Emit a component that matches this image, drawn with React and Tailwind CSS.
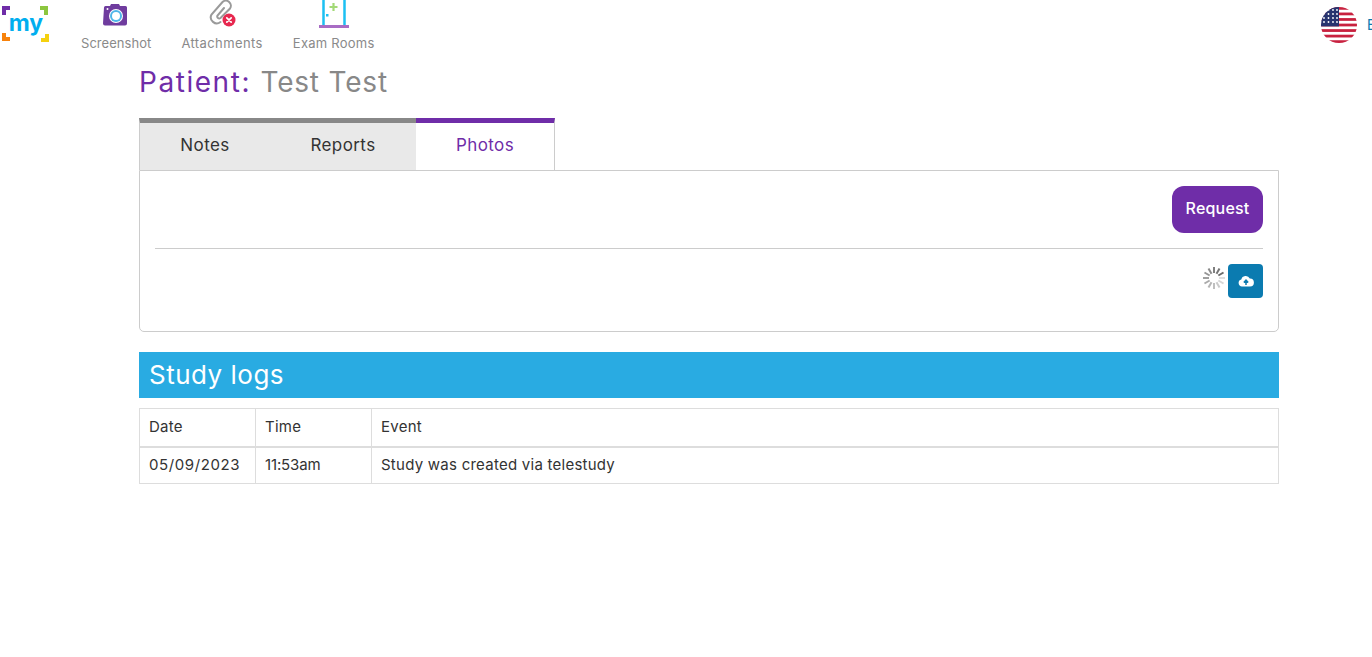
const FONT = "font-['Inter','Liberation_Sans',sans-serif]";

function Logo() {
  return (
    <svg width="50" height="44" viewBox="0 0 50 44" className="block">
      <path d="M2 6h8v4H6v5H2z" fill="#6f2da8" />
      <path d="M40 6h8v9h-4v-5h-4z" fill="#8cc63f" />
      <path d="M2 33h4v4h4v4H2z" fill="#f7820c" />
      <path d="M45 34h4v8h-8v-4h4z" fill="#f5d10f" />
      <text x="26" y="31" textAnchor="middle" fontSize="23" fontWeight="700" fill="#00aeef" fontFamily="Inter, sans-serif">my</text>
    </svg>
  );
}

function CameraIcon() {
  return (
    <svg width="26" height="26" viewBox="0 0 26 26" className="block">
      <path d="M1 5.500a1.500 1.500 0 0 1 1.500-1.500h4.500l1-2h8l1 2h5.500a1.500 1.500 0 0 1 1.500 1.500v16a2 2 0 0 1-2 2h-20a2 2 0 0 1-2-2z" fill="#6f3c9e" />
      <circle cx="13" cy="14" r="7" fill="#fff" />
      <circle cx="13" cy="14" r="6" fill="#4fb5e8" />
      <circle cx="13" cy="14" r="4" fill="#fff" />
      <circle cx="4.500" cy="7" r="1" fill="#fff" />
    </svg>
  );
}

function ClipIcon() {
  return (
    <svg width="30" height="28" viewBox="0 0 30 28" className="block">
      <path d="M17 8 10.500 15.500a2 2 0 0 0 3 2.500L23 8.500a5 5 0 0 0-7.500-6.500L4.500 14.500a6 6 0 0 0 9 7.500" fill="none" stroke="#9a9a9a" strokeWidth="2" strokeLinecap="round" />
      <circle cx="22" cy="20" r="6.500" fill="#e7284f" />
      <path d="m19.800 17.800 4.400 4.400m0-4.400-4.400 4.400" stroke="#fff" strokeWidth="1.700" strokeLinecap="round" />
    </svg>
  );
}

function DoorIcon() {
  return (
    <svg width="32" height="28" viewBox="0 0 32 28" className="block">
      <path d="M5.500 0v25M26.500 0v25" stroke="#1cc0f2" strokeWidth="2.500" fill="none" />
      <path d="M15.500 3v8M11.500 7h8" stroke="#a3d977" strokeWidth="2.200" />
      <rect x="8" y="14" width="2.500" height="2.500" fill="#1cc0f2" />
      <rect x="1" y="25" width="30" height="3" fill="#a86cc4" />
    </svg>
  );
}

function Flag() {
  const stripes = [0, 2, 4, 6, 8, 10, 12].map(i => i * 2.77);
  return (
    <svg width="36" height="36" viewBox="0 0 36 36" className="block">
      <clipPath id="flagClip"><circle cx="18" cy="18" r="18" /></clipPath>
      <g clipPath="url(#flagClip)">
        <rect width="36" height="36" fill="#fff" />
        {stripes.map(y => <rect key={y} y={y} width="36" height="2.770" fill="#c8213f" />)}
        <rect width="18" height="19.400" fill="#27346f" />
        {[3, 7, 11, 15].map(y => [3, 7.500, 12, 16].map(x => (
          <circle key={`${x}-${y}`} cx={x} cy={y} r="0.900" fill="#fff" />
        )))}
      </g>
    </svg>
  );
}

function Spinner() {
  const ticks = [...Array(12).keys()];
  return (
    <svg width="24" height="24" viewBox="0 0 24 24" className="block mt-[2px]">
      {ticks.map(i => (
        <line key={i} x1="12" y1="1" x2="12" y2="7" stroke="#666" strokeWidth="2"
          opacity={0.2 + ((i + 9) % 12) * 0.07} transform={`rotate(${i * 30} 12 12)`} />
      ))}
    </svg>
  );
}

function UploadIcon() {
  return (
    <svg width="16" height="12" viewBox="0 0 16 12" className="block">
      <path d="M4 11.500a3.500 3.500 0 0 1-.7-6.900A4.500 4.500 0 0 1 11.800 3.500a4 4 0 0 1 .2 8z" fill="#fff" />
      <path d="M8 10V5.500M5.800 7.500 8 5.200l2.200 2.300" stroke="#0b7bb0" strokeWidth="1.500" fill="none" />
    </svg>
  );
}

function NavItem({ icon, label, track }) {
  return (
    <div className="flex flex-col items-center">
      <div className="h-[28px] flex items-end">{icon}</div>
      <div className={`mt-[7px] text-[13px] leading-[16px] text-[#8a8a8a] ${track}`}>{label}</div>
    </div>
  );
}

export default function App() {
  return (
    <div className={`${FONT} w-[1372px] h-[657px] overflow-hidden bg-white`}>
      {/* top bar */}
      <div className="flex h-[52px]">
        <div className="w-[81px]"><Logo /></div>
        <div className="flex gap-[30px]">
          <NavItem icon={<CameraIcon />} label="Screenshot" track="tracking-[0.05px]" />
          <NavItem icon={<ClipIcon />} label="Attachments" track="tracking-[0.4px]" />
          <NavItem icon={<DoorIcon />} label="Exam Rooms" track="tracking-[0.25px]" />
        </div>
        <div className="ml-auto flex items-start gap-[10px] pt-[7px] w-[51px]">
          <div className="shrink-0"><Flag /></div>
          <span className="text-[14px] leading-[36px] text-[#0b7bb0]">E</span>
        </div>
      </div>

      <div className="ml-[139px] w-[1140px]">
        <h1 className="h-[66px] pt-[13px] text-[28px] leading-[34px] font-normal whitespace-nowrap">
          <span className="text-[#6f2da8] tracking-[1.55px]">Patient: </span>
          <span className="text-[#888] tracking-[0.8px]">Test Test</span>
        </h1>

        {/* tabs */}
        <div className="flex w-[416px] h-[52px] text-[17px] tracking-[0.4px]">
          <div className="w-[131px] pb-[2px] border-t-[5px] border-l border-[#888] border-l-[#ccc] bg-[#e9e9e9] flex items-center justify-center text-[#333]">Notes</div>
          <div className="w-[146px] pb-[2px] border-t-[5px] border-[#888] bg-[#e9e9e9] flex items-center justify-center text-[#333]">Reports</div>
          <div className="w-[139px] pb-[2px] border-t-[5px] border-r border-[#6f2da8] border-r-[#ccc] flex items-center justify-center text-[#6f2da8]">Photos</div>
        </div>

        {/* photos panel */}
        <div className="h-[162px] border border-[#ccc] rounded-b-[5px] px-[15px] pt-[15px]">
          <div className="flex justify-end pb-[15px] border-b border-[#ccc]">
            <button className="w-[91px] h-[47px] pb-[3px] rounded-[12px] bg-[#6f2da8] text-white text-[16px] font-medium tracking-[0.2px]">Request</button>
          </div>
          <div className="flex justify-end items-start mt-[15px]">
            <Spinner />
            <button className="ml-[2px] w-[35px] h-[34px] rounded-[4px] bg-[#0b7bb0] flex items-center justify-center"><UploadIcon /></button>
          </div>
        </div>

        {/* study logs */}
        <div className="mt-[20px] h-[46px] bg-[#29abe2] pl-[10px] text-[26px] leading-[46px] tracking-[0.5px] font-normal text-white">Study logs</div>
        <table className="mt-[10px] w-full border-collapse text-[15px] tracking-[0.25px] text-[#333]">
          <thead>
            <tr className="h-[38px] border-b-2 border-[#ddd]">
              <th className="w-[116px] border border-[#ddd] pl-[9px] pb-[1px] text-left font-normal">Date</th>
              <th className="w-[116px] border border-[#ddd] pl-[9px] pb-[1px] text-left font-normal">Time</th>
              <th className="border border-[#ddd] pl-[9px] pb-[1px] text-left font-normal">Event</th>
            </tr>
          </thead>
          <tbody>
            <tr className="h-[37px]">
              <td className="border border-[#ddd] pl-[9px] pb-[1px] tracking-[0.6px]">05/09/2023</td>
              <td className="border border-[#ddd] pl-[9px] pb-[1px] tracking-[-0.15px]">11:53am</td>
              <td className="border border-[#ddd] pl-[9px] pb-[1px]">Study was created via telestudy</td>
            </tr>
          </tbody>
        </table>
      </div>
    </div>
  );
}
